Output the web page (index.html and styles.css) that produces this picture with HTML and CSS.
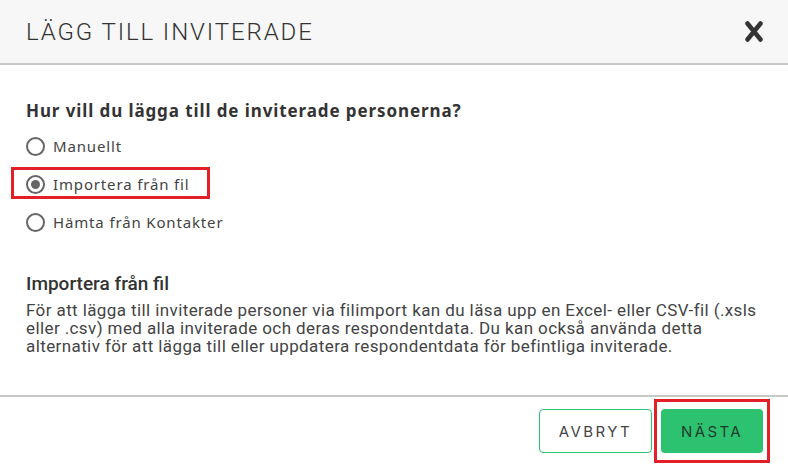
FILE: index.html
```html
<!DOCTYPE html>
<html lang="sv">
<head>
<meta charset="utf-8">
<title>Lägg till inviterade</title>
<link rel="stylesheet" href="styles.css">
</head>
<body>
<div class="modal">
  <header class="head">
    <h1 class="title">LÄGG TILL INVITERADE</h1>
    <button class="close" aria-label="Stäng">
      <svg width="18" height="21" viewBox="0 0 18 21"><path d="M2.5 2.5 L15.5 18.5 M15.5 2.5 L2.5 18.5" stroke="#333" stroke-width="4.5" stroke-linecap="round"/></svg>
    </button>
  </header>
  <main class="body">
    <h2 class="question">Hur vill du lägga till de inviterade personerna?</h2>
    <div class="options">
      <label class="opt"><span class="radio"></span><span>Manuellt</span></label>
      <label class="opt hl"><span class="radio on"></span><span>Importera från fil</span></label>
      <label class="opt"><span class="radio"></span><span>Hämta från Kontakter</span></label>
    </div>
    <h3 class="sub">Importera från fil</h3>
    <p class="desc">För att lägga till inviterade personer via filimport kan du läsa upp en Excel- eller CSV-fil (.xsls eller .csv) med alla inviterade och deras respondentdata. Du kan också använda detta alternativ för att lägga till eller uppdatera respondentdata för befintliga inviterade.</p>
  </main>
  <footer class="foot">
    <button class="btn cancel">AVBRYT</button>
    <div class="hlbox"><button class="btn next">NÄSTA</button></div>
  </footer>
</div>
</body>
</html>
```
FILE: styles.css
```css
html, body { margin: 0; padding: 0; background: #fff; }
body { width: 788px; height: 467px; overflow: hidden; font-family: "Noto Sans", sans-serif; color: #333; }
.modal { width: 788px; height: 467px; display: flex; flex-direction: column; }
.head { height: 63px; flex: none; background: #f7f7f7; border-bottom: 2px solid #c8c8c8; display: flex; align-items: center; justify-content: space-between; padding: 0 25px 0 26px; }
.title { margin: 0; font-family: Roboto, sans-serif; font-weight: 300; font-size: 24px; letter-spacing: 1.9px; color: #333; }
.close { border: 0; background: none; padding: 0; width: 18px; height: 21px; display: flex; margin-top: 0; }
.body { flex: 1; padding: 34px 26px 0 26px; }
.question { margin: 0; font-family: "Noto Sans", sans-serif; font-weight: 700; font-size: 17px; letter-spacing: 0.9px; color: #333; line-height: 24px; }
.options { margin-top: 10px; display: flex; flex-direction: column; gap: 12px; }
.opt { display: flex; align-items: center; gap: 8px; font-size: 15px; letter-spacing: 0.85px; color: #444; height: 26px; position: relative; }
.radio { width: 15px; height: 15px; border: 2px solid #666; border-radius: 50%; display: inline-flex; align-items: center; justify-content: center; flex: none; }
.radio.on::after { content: ""; width: 9px; height: 9px; border-radius: 50%; background: #666; }
.hl::before { content: ""; position: absolute; left: -15px; top: -4px; width: 193px; height: 26px; border: 3px solid #e3202a; }
.sub { margin: 37px 0 0 0; font-family: Roboto, sans-serif; font-weight: 500; font-size: 19px; color: #333; line-height: 24px; }
.desc { margin: 5px 0 0 0; font-family: Roboto, sans-serif; font-size: 17px; letter-spacing: 0.4px; line-height: 18px; color: #444; }
.foot { height: 68px; flex: none; border-top: 2px solid #c8c8c8; display: flex; justify-content: flex-end; align-items: flex-start; padding: 2px 18px 0 0; gap: 2px; }
.btn { font-family: Inter, sans-serif; font-size: 15px; letter-spacing: 2.4px; border-radius: 4px; height: 44px; cursor: pointer; padding: 0; }
.cancel { width: 113px; background: #fff; border: 1px solid #2dc26f; color: #444; margin-top: 10px; }
.hlbox { border: 3px solid #e3202a; padding: 7px 4px; }
.next { width: 102px; background: #2dc26f; border: 0; color: #1e3b2b; display: block; }
```
